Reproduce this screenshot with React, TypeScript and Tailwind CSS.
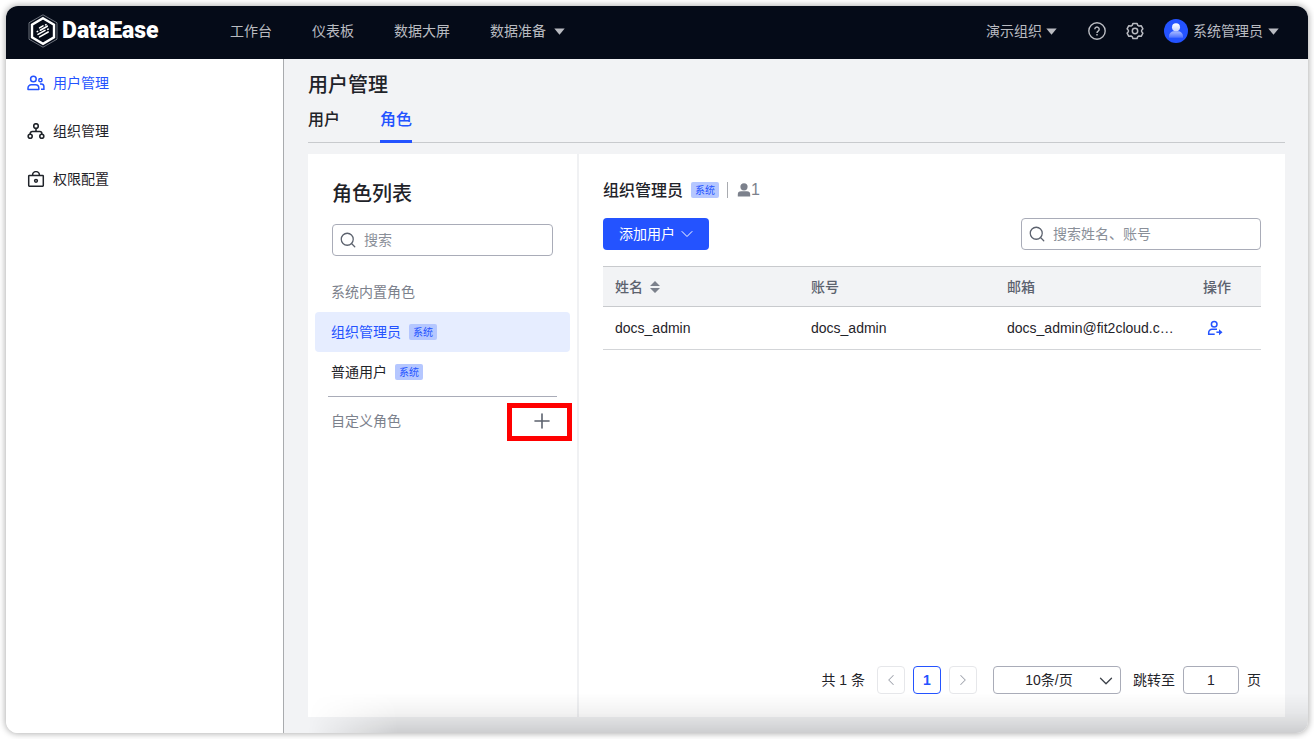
import React, { useState } from 'react';
import { ChevronDown, ChevronLeft, ChevronRight, Plus, Search } from 'lucide-react';

interface Member {
  name: string;
  account: string;
  email: string;
}

const members: Member[] = [
  { name: 'docs_admin', account: 'docs_admin', email: 'docs_admin@fit2cloud.com' },
];

const navItems = ['工作台', '仪表板', '数据大屏'];

const Caret: React.FC = () => (
  <svg width="11" height="7" viewBox="0 0 11 7" fill="currentColor" aria-hidden="true">
    <path d="M0.3 0.6h10.4L5.5 6.8z" />
  </svg>
);

const LogoMark: React.FC = () => (
  <svg width="30" height="34" viewBox="0 0 30 34" fill="none" aria-hidden="true">
    <path d="M15 0.8L29 8.8v16.4L15 33.2L1 25.2V8.8z" stroke="#9a9da6" strokeWidth="0.7" />
    <path d="M15 4.2L26 10.6v12.8L15 29.8L4 23.4V10.6z" stroke="#fff" strokeWidth="2.4" />
    <g stroke="#fff" strokeWidth="1.6" strokeLinecap="round">
      <path d="M11.6 13.9l3.4-2M17.6 10.900l.4-.2" />
      <path d="M9.2 17.600l.4-.2M12.300 16.200l7-4" />
      <path d="M10 20.400l7-4M19.800 15.300l.4-.2" />
      <path d="M11.600 22.900l8.600-4.900" />
    </g>
  </svg>
);

const UsersIcon: React.FC = () => (
  <svg width="18" height="16" viewBox="0 0 18 16" fill="none" stroke="currentColor" strokeWidth="1.5" aria-hidden="true">
    <circle cx="6.4" cy="4" r="2.8" />
    <path d="M1 14.6v-1.600a3.300 3.300 0 0 1 3.300-3.300h4.200a3.300 3.300 0 0 1 3.300 3.300v1.600z" strokeLinejoin="round" />
    <circle cx="13.4" cy="5.2" r="1.6" />
    <path d="M13 9h1.300a2.600 2.600 0 0 1 2.600 2.600v2.600H14" />
  </svg>
);

const OrgIcon: React.FC = () => (
  <svg width="18" height="16" viewBox="0 0 18 16" fill="none" stroke="currentColor" strokeWidth="1.6" aria-hidden="true">
    <circle cx="9" cy="3" r="2.3" />
    <circle cx="3.2" cy="13.2" r="2" />
    <circle cx="14.8" cy="13.2" r="2" />
    <path d="M9 5.300v3.200M3.200 11.200v-.7a2 2 0 0 1 2-2h7.600a2 2 0 0 1 2 2v.7" />
  </svg>
);

const LockIcon: React.FC = () => (
  <svg width="18" height="16" viewBox="0 0 18 16" fill="none" stroke="currentColor" strokeWidth="1.5" aria-hidden="true">
    <rect x="1.7" y="4.600" width="14.600" height="10.600" rx="0.600" />
    <path d="M5.600 4.600V4a3.400 3.400 0 0 1 6.800 0v.6" />
    <circle cx="9" cy="9.800" r="1.400" />
  </svg>
);

const HelpIcon: React.FC = () => (
  <svg width="18" height="18" viewBox="0 0 18 18" fill="none" stroke="currentColor" strokeWidth="1.4" aria-hidden="true">
    <circle cx="9" cy="9" r="8.2" />
    <path d="M6.8 7.200a2.200 2.200 0 1 1 3.500 1.800c-.8.6-1.300.9-1.300 1.900" />
    <path d="M9 12v1.5" strokeWidth="1.5" />
  </svg>
);

const GearIcon: React.FC = () => (
  <svg width="18" height="18" viewBox="0 0 18 18" fill="none" stroke="currentColor" strokeWidth="1.5" strokeLinejoin="round" aria-hidden="true">
    <path d="M7 1.400h4l.8 2 1.200.7 2.200-.4 1.700 3.100-1.300 1.600v1.200l1.300 1.600-1.700 3.100-2.200-.4-1.200.7-.8 2H7l-.8-2-1.200-.7-2.200.4-1.700-3.100 1.300-1.600V8.400L1.100 6.800l1.700-3.100 2.200.4 1.200-.7z" />
    <circle cx="9" cy="9" r="2.7" />
  </svg>
);

const Avatar: React.FC = () => (
  <svg width="24" height="24" viewBox="0 0 24 24" aria-hidden="true">
    <defs>
      <linearGradient id="avatar-body" x1="0" y1="0" x2="0" y2="1">
        <stop offset="0" stopColor="#a9bbff" />
        <stop offset="1" stopColor="#4a6fff" />
      </linearGradient>
      <linearGradient id="avatar-head" x1="0" y1="0" x2="0" y2="1">
        <stop offset="0" stopColor="#fff" />
        <stop offset="1" stopColor="#c6d2ff" />
      </linearGradient>
    </defs>
    <circle cx="12" cy="12" r="12" fill="#2453ff" />
    <path d="M5 18.800v-1.500a5 5 0 0 1 5-5h4a5 5 0 0 1 5 5v1.500z" fill="url(#avatar-body)" />
    <circle cx="12" cy="8.200" r="4" fill="url(#avatar-head)" />
  </svg>
);

const PersonIcon: React.FC = () => (
  <svg width="14" height="14" viewBox="0 0 14 14" fill="currentColor" aria-hidden="true">
    <circle cx="7" cy="3.800" r="3.600" />
    <path d="M0.800 13.600v-2a3.300 3.300 0 0 1 3.300-3.300h5.800a3.300 3.300 0 0 1 3.300 3.300v2z" />
  </svg>
);

const RemoveIcon: React.FC = () => (
  <svg width="16" height="16" viewBox="0 0 16 16" fill="none" stroke="currentColor" strokeWidth="1.5" aria-hidden="true">
    <circle cx="7.200" cy="4.200" r="2.800" />
    <path d="M10 9.200H5A3.300 3.300 0 0 0 1.700 12.500v1.800h6" />
    <path d="M9.400 12.200h4" />
    <path d="M12 9.200l3.500 3-3.500 3z" fill="currentColor" stroke="none" />
  </svg>
);

const SortIcon: React.FC = () => (
  <svg width="10" height="12" viewBox="0 0 10 12" fill="#7c818c" aria-hidden="true">
    <path d="M5 0l5 5H0zM5 12l5-5H0z" />
  </svg>
);

const SystemTag: React.FC = () => (
  <span className="flex h-4 w-7 shrink-0 items-center justify-center rounded-xs bg-[#b5c7ff] pt-px text-[10px] leading-4 font-normal text-[#2453ff]">
    系统
  </span>
);

interface SearchBoxProps {
  label: string;
  className?: string;
}

const SearchBox: React.FC<SearchBoxProps> = ({ label, className = '' }) => (
  <label className={`flex h-8 items-center gap-[7px] rounded border border-[#a9acb8] bg-white px-1.5 ${className}`}>
    <Search size={18} strokeWidth={1.7} className="shrink-0 text-[#5c626e]" />
    <input
      type="text"
      aria-label={label}
      placeholder={label}
      className="w-full min-w-0 bg-transparent text-sm text-[#1f2329] outline-none placeholder:text-[#8a8f99]"
    />
  </label>
);

const Header: React.FC = () => (
  <header className="flex h-[53px] shrink-0 items-center justify-between bg-[#050b18] pr-[29px] pb-[3px] pl-[22px] text-sm text-[#b9bbc1]">
    <div className="flex items-center">
      <a href="#" className="flex w-[202px] items-center gap-1 text-white">
        <LogoMark />
        <span className="font-['Roboto',sans-serif] text-[23px] leading-8 font-black">DataEase</span>
      </a>
      <nav className="flex items-center gap-10">
        {navItems.map((item) => (
          <a key={item} href="#">{item}</a>
        ))}
        <button type="button" className="flex items-center gap-2">
          数据准备 <Caret />
        </button>
      </nav>
    </div>
    <div className="flex items-center">
      <button type="button" className="flex items-center gap-1">
        演示组织 <Caret />
      </button>
      <button type="button" aria-label="帮助" className="ml-[31px]"><HelpIcon /></button>
      <button type="button" aria-label="设置" className="ml-5"><GearIcon /></button>
      <button type="button" className="ml-5 flex items-center gap-[5px]">
        <Avatar /> 系统管理员 <Caret />
      </button>
    </div>
  </header>
);

const Sidebar: React.FC = () => {
  const items = [
    { label: '用户管理', icon: <UsersIcon />, active: true },
    { label: '组织管理', icon: <OrgIcon />, active: false },
    { label: '权限配置', icon: <LockIcon />, active: false },
  ];

  return (
    <aside className="w-[278px] shrink-0 border-r border-[#a9abae] bg-white">
      <nav>
        {items.map((item) => (
          <a
            key={item.label}
            href="#"
            className={`flex h-12 items-center gap-2 px-[21px] text-sm ${item.active ? 'text-[#2453ff]' : 'text-[#1f2329]'}`}
          >
            {item.icon}
            {item.label}
          </a>
        ))}
      </nav>
    </aside>
  );
};

const RolePanel: React.FC = () => {
  const [role, setRole] = useState('组织管理员');

  return (
    <section className="w-[271px] shrink-0 border-r-2 border-[#f0f1f3] pt-6">
      <div className="px-6">
        <h2 className="text-xl leading-8 font-medium">角色列表</h2>
        <SearchBox label="搜索" className="mt-3.5" />
      </div>
      <div className="mt-4 px-[7px] text-sm">
        <p className="flex h-10 items-center px-4 text-[#7c818c]">系统内置角色</p>
        {['组织管理员', '普通用户'].map((item) => (
          <button
            key={item}
            type="button"
            onClick={() => setRole(item)}
            className={`flex h-10 w-full items-center gap-2 rounded px-4 ${role === item ? 'bg-[#e6edff] text-[#2453ff]' : 'text-[#1f2329]'}`}
          >
            {item}
            <SystemTag />
          </button>
        ))}
        <hr className="mx-[13px] mt-1 border-[#a9acb8]" />
        <div className="relative mt-1 flex h-10 items-center justify-between px-4 text-[#7c818c]">
          自定义角色
          <button type="button" aria-label="添加角色">
            <Plus size={24} strokeWidth={1.6} className="text-[#5c626e]" />
          </button>
          <span className="pointer-events-none absolute top-0.5 -right-0.5 h-[38px] w-[65px] border-5 border-[#ff0000]" />
        </div>
      </div>
    </section>
  );
};

const MemberTable: React.FC = () => (
  <table className="mt-4 w-full table-fixed border-collapse text-left text-sm">
    <thead>
      <tr className="h-10 border-y border-[#c8cacd] bg-[#f2f3f5] text-[#5c626e]">
        <th className="px-3 font-medium">
          <button type="button" className="flex items-center gap-[7px]">
            姓名 <SortIcon />
          </button>
        </th>
        <th className="px-3 font-medium">账号</th>
        <th className="px-3 font-medium">邮箱</th>
        <th className="w-[70px] px-3 font-medium">操作</th>
      </tr>
    </thead>
    <tbody>
      {members.map((member) => (
        <tr key={member.account} className="h-[43px] border-b border-[#d3d5d8]">
          <td className="truncate px-3">{member.name}</td>
          <td className="truncate px-3">{member.account}</td>
          <td className="truncate px-3">{member.email}</td>
          <td className="px-4">
            <button type="button" aria-label="移除用户" className="flex text-[#2453ff]">
              <RemoveIcon />
            </button>
          </td>
        </tr>
      ))}
    </tbody>
  </table>
);

const Pagination: React.FC = () => (
  <div className="mt-auto flex items-center justify-end text-sm">
    <span className="mr-3">共 1 条</span>
    <div className="flex gap-2">
      <button type="button" aria-label="上一页" className="flex size-7 items-center justify-center rounded border border-[#e6e7ea] text-[#a0a4ad]">
        <ChevronLeft size={18} strokeWidth={1.4} />
      </button>
      <button type="button" className="size-7 rounded border border-[#2453ff] font-bold text-[#2453ff]">1</button>
      <button type="button" aria-label="下一页" className="flex size-7 items-center justify-center rounded border border-[#e6e7ea] text-[#a0a4ad]">
        <ChevronRight size={18} strokeWidth={1.4} />
      </button>
    </div>
    <div className="relative ml-4">
      <select aria-label="每页条数" className="h-7 w-32 appearance-none rounded border border-[#a9acb8] bg-white pr-7 pl-3 text-center">
        <option>10条/页</option>
        <option>20条/页</option>
        <option>50条/页</option>
      </select>
      <ChevronDown size={22} strokeWidth={1.4} className="pointer-events-none absolute top-1 right-1 text-[#3c4149]" />
    </div>
    <label className="ml-3 flex items-center gap-2">
      跳转至
      <input type="text" defaultValue="1" className="h-7 w-14 rounded border border-[#a9acb8] bg-white text-center" />
      页
    </label>
  </div>
);

const App: React.FC = () => {
  return (
    <div className="flex h-screen bg-white p-1.5 font-['Liberation_Sans','Noto_Sans_CJK_SC',sans-serif] text-[#1f2329]">
      <div className="relative flex min-w-0 flex-1 flex-col overflow-hidden rounded-xl shadow-[0_0_6px_1px_rgba(0,0,0,0.3)]">
        <Header />
        <div className="flex min-h-0 flex-1">
          <Sidebar />
          <main className="flex min-w-0 flex-1 flex-col bg-[#f2f3f5] pt-2 pr-[23px] pb-4 pl-6">
            <h1 className="pt-0.5 text-xl leading-8 font-medium">用户管理</h1>
            <div role="tablist" className="flex h-[42px] gap-10 border-b border-[#c8cacd] text-base font-medium">
              <button type="button" role="tab" aria-selected="false" className="pb-1">用户</button>
              <button type="button" role="tab" aria-selected="true" className="-mb-px border-b-3 border-[#2453ff] pb-0.5 text-[#2453ff]">角色</button>
            </div>
            <div className="mt-[11px] flex min-h-0 flex-1 bg-white">
              <RolePanel />
              <section className="flex min-w-0 flex-1 flex-col px-6 pt-6 pb-[23px]">
                <div className="flex h-6 items-center gap-2">
                  <h2 className="pt-0.5 text-base font-medium">组织管理员</h2>
                  <SystemTag />
                  <span className="h-4 w-px bg-[#a9abb0]" />
                  <span className="flex items-center pl-px text-base text-[#7c818c]">
                    <PersonIcon />1
                  </span>
                </div>
                <div className="mt-4 flex items-center justify-between">
                  <button type="button" className="flex h-8 items-center gap-0.5 rounded bg-[#2453ff] pr-3 pl-4 text-sm text-white">
                    添加用户 <ChevronDown size={20} strokeWidth={1.2} />
                  </button>
                  <SearchBox label="搜索姓名、账号" className="w-60" />
                </div>
                <MemberTable />
                <Pagination />
              </section>
            </div>
          </main>
        </div>
        {/* soft shade along the bottom edge of the content area */}
        <div className="pointer-events-none absolute right-0 bottom-0 left-[302px] h-10 bg-linear-to-b from-transparent via-black/5 to-black/15 mask-[linear-gradient(to_right,transparent,black_90px)]" />
      </div>
    </div>
  );
};

export default App;
